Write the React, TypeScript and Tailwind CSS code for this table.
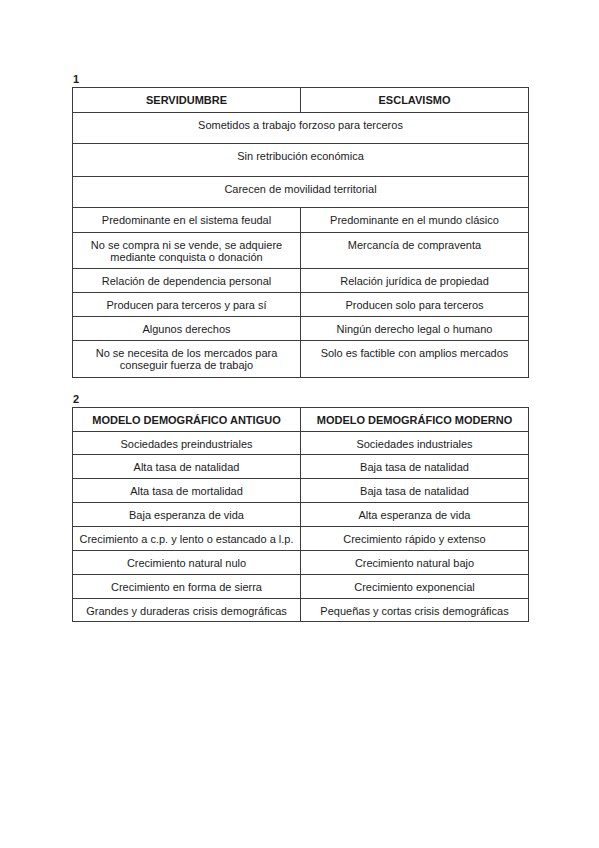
import React from "react";

type Row = { h: string; cells: React.ReactNode[]; bold?: boolean };

const t1: Row[] = [
  { h: "h-[25px]", cells: ["SERVIDUMBRE", "ESCLAVISMO"], bold: true },
  { h: "h-[31px]", cells: ["Sometidos a trabajo forzoso para terceros"] },
  { h: "h-[33px]", cells: ["Sin retribución económica"] },
  { h: "h-[31px]", cells: ["Carecen de movilidad territorial"] },
  { h: "h-[25px]", cells: ["Predominante en el sistema feudal", "Predominante en el mundo clásico"] },
  {
    h: "h-[36px]",
    cells: [
      <>
        No se compra ni se vende, se adquiere
        <br />
        mediante conquista o donación
      </>,
      "Mercancía de compraventa",
    ],
  },
  { h: "h-[24px]", cells: ["Relación de dependencia personal", "Relación jurídica de propiedad"] },
  { h: "h-[24px]", cells: ["Producen para terceros y para sí", "Producen solo para terceros"] },
  { h: "h-[24px]", cells: ["Algunos derechos", "Ningún derecho legal o humano"] },
  {
    h: "h-[37px]",
    cells: [
      <>
        No se necesita de los mercados para
        <br />
        conseguir fuerza de trabajo
      </>,
      "Solo es factible con amplios mercados",
    ],
  },
];

const t2: Row[] = [
  { h: "h-[24px]", cells: ["MODELO DEMOGRÁFICO ANTIGUO", "MODELO DEMOGRÁFICO MODERNO"], bold: true },
  { h: "h-[23px]", cells: ["Sociedades preindustriales", "Sociedades industriales"] },
  { h: "h-[24px]", cells: ["Alta tasa de natalidad", "Baja tasa de natalidad"] },
  { h: "h-[24px]", cells: ["Alta tasa de mortalidad", "Baja tasa de natalidad"] },
  { h: "h-[24px]", cells: ["Baja esperanza de vida", "Alta esperanza de vida"] },
  { h: "h-[24px]", cells: ["Crecimiento a c.p. y lento o estancado a l.p.", "Crecimiento rápido y extenso"] },
  { h: "h-[24px]", cells: ["Crecimiento natural nulo", "Crecimiento natural bajo"] },
  { h: "h-[24px]", cells: ["Crecimiento en forma de sierra", "Crecimiento exponencial"] },
  { h: "h-[23px]", cells: ["Grandes y duraderas crisis demográficas", "Pequeñas y cortas crisis demográficas"] },
];

function Table({ rows }: { rows: Row[] }) {
  return (
    <div className="w-[457px] border-t border-l border-[#3c3c3c]">
      {rows.map((r, i) => (
        <div key={i} className={`flex ${r.h}`}>
          {r.cells.map((c, j) => (
            <div
              key={j}
              className={`${r.cells.length === 1 ? "w-[456px]" : "w-[228px]"} shrink-0 border-r border-b border-[#3c3c3c] pt-[6px] text-center text-[11px] leading-[12px] whitespace-nowrap ${r.bold ? "font-bold" : ""}`}
            >
              {c}
            </div>
          ))}
        </div>
      ))}
    </div>
  );
}

export default function App() {
  return (
    <div
      className="w-[599px] h-[848px] bg-white text-[#1c1c1c] pl-[72px] pt-[73px]"
      style={{ fontFamily: '"Liberation Sans", Arial, sans-serif' }}
    >
      <div className="text-[11px] leading-[12px] font-bold mb-[2px] pl-[1px]">1</div>
      <Table rows={t1} />
      <div className="text-[11px] leading-[12px] font-bold mb-[2px] mt-[15px] pl-[1px]">2</div>
      <Table rows={t2} />
    </div>
  );
}
